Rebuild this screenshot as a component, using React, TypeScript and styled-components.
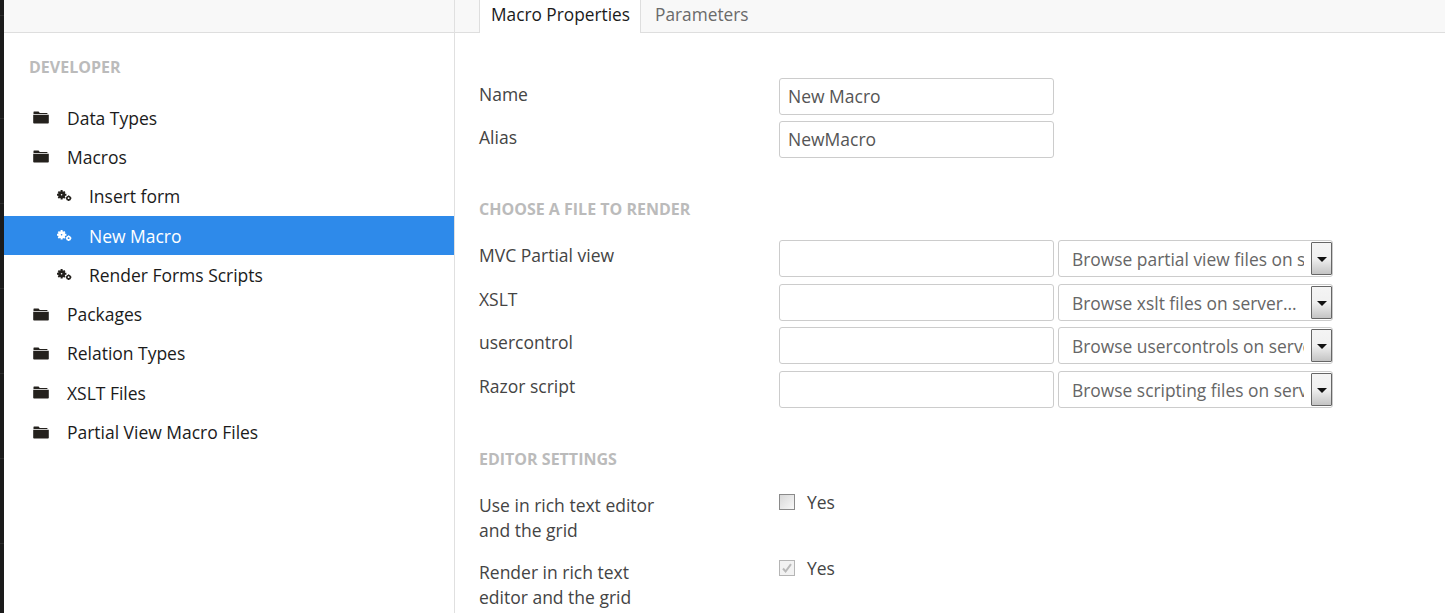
import React from "react";
import styled, { createGlobalStyle } from "styled-components";

const GlobalStyle = createGlobalStyle`
  html, body {
    margin: 0;
    padding: 0;
    height: 100%;
    overflow: hidden;
    background: #fff;
  }
  body {
    font-family: "Open Sans", "Liberation Sans", sans-serif;
    font-size: 17.5px;
    color: #444;
  }
`;

const FolderIcon = () => (
  <Folder viewBox="0 0 16 13" aria-hidden="true">
    <path d="M1 0.5h4.6l1.2 1.5h7.2c.3 0 .5.2.5.5v.5H.5V1c0-.3.2-.5.5-.5z" />
    <path d="M0.2 3.8h15.6v7.9c0 .5-.4.8-.8.8H1c-.4 0-.8-.3-.8-.8z" />
  </Folder>
);

const GearsIcon = ({ active }: { active?: boolean }) => (
  <Gears viewBox="0 0 15 12" $active={active} aria-hidden="true">
    <circle cx="4.6" cy="4.8" r="2.2" fill="none" stroke="currentColor" strokeWidth="2.8" />
    <path
      d="M3.6 0h2v2h-2zM3.6 7.6h2v2h-2zM-.2 3.8h2v2h-2zM7.4 3.8h2v2h-2zM.7 2.2L2 .9l1.4 1.4-1.3 1.3zM5.8 2.3L7.2.9l1.3 1.3-1.4 1.4zM.7 7.4L2.1 6l1.3 1.3L2 8.7zM5.8 7.3L7.1 6l1.4 1.4-1.3 1.3z"
      fill="currentColor"
    />
    <circle cx="11.6" cy="8.2" r="1.7" fill="none" stroke="currentColor" strokeWidth="1.6" />
    <path d="M11 5.4h1.2v1.2H11zM11 9.8h1.2V11H11zM8.8 7.6H10v1.2H8.8zM13.2 7.6h1.2v1.2h-1.2z" fill="currentColor" />
  </Gears>
);

const tree = [
  { label: "Data Types", kind: "folder" },
  { label: "Macros", kind: "folder" },
  { label: "Insert form", kind: "macro" },
  { label: "New Macro", kind: "macro", active: true },
  { label: "Render Forms Scripts", kind: "macro" },
  { label: "Packages", kind: "folder" },
  { label: "Relation Types", kind: "folder" },
  { label: "XSLT Files", kind: "folder" },
  { label: "Partial View Macro Files", kind: "folder" },
];

const files = [
  { label: "MVC Partial view", placeholder: "Browse partial view files on server..." },
  { label: "XSLT", placeholder: "Browse xslt files on server..." },
  { label: "usercontrol", placeholder: "Browse usercontrols on server..." },
  { label: "Razor script", placeholder: "Browse scripting files on server..." },
];

const App = () => {
  return (
    <Page>
      <GlobalStyle />
      <Rail />
      <Sidebar>
        <SideTop />
        <SectionTitle>DEVELOPER</SectionTitle>
        <Tree>
          {tree.map((item) => (
            <TreeRow key={item.label} $active={item.active}>
              {item.kind === "folder" ? (
                <FolderSlot>
                  <FolderIcon />
                </FolderSlot>
              ) : (
                <MacroSlot>
                  <GearsIcon active={item.active} />
                </MacroSlot>
              )}
              {item.label}
            </TreeRow>
          ))}
        </Tree>
      </Sidebar>
      <Main>
        <TabBar>
          <Tab $active>Macro Properties</Tab>
          <Tab>Parameters</Tab>
        </TabBar>
        <Form>
          <NameRows>
            <FieldRow>
              <Label>Name</Label>
              <TextInput defaultValue="New Macro" />
            </FieldRow>
            <FieldRow>
              <Label>Alias</Label>
              <TextInput defaultValue="NewMacro" />
            </FieldRow>
          </NameRows>
          <Heading>CHOOSE A FILE TO RENDER</Heading>
          <FileRows>
            {files.map((file) => (
              <FieldRow key={file.label}>
                <FileLabel>{file.label}</FileLabel>
                <TextInput />
                <Select>
                  <SelectText>{file.placeholder}</SelectText>
                  <SelectButton>
                    <Caret />
                  </SelectButton>
                </Select>
              </FieldRow>
            ))}
          </FileRows>
          <Heading $second>EDITOR SETTINGS</Heading>
          <CheckRow>
            <CheckLabel>
              Use in rich text editor
              <br />
              and the grid
            </CheckLabel>
            <CheckField>
              <Box />
              Yes
            </CheckField>
          </CheckRow>
          <CheckRow>
            <CheckLabel>
              Render in rich text
              <br />
              editor and the grid
            </CheckLabel>
            <CheckField>
              <Box $checked>
                <svg viewBox="0 0 14 14" width="14" height="14" aria-hidden="true">
                  <path d="M3 7.5l2.6 3L11 3.2" fill="none" stroke="#b9b9b9" strokeWidth="2" />
                </svg>
              </Box>
              Yes
            </CheckField>
          </CheckRow>
        </Form>
      </Main>
    </Page>
  );
};

const Page = styled.div`
  display: flex;
  height: 613px;
  overflow: hidden;
`;

const Rail = styled.div`
  flex: 0 0 4px;
  background: repeating-linear-gradient(
    to bottom,
    #1b1b1b 0,
    #1b1b1b 84px,
    #2c2c2c 84px,
    #2c2c2c 85px
  );
  background-position: 0 34px;
`;

const Sidebar = styled.aside`
  flex: 0 0 450px;
  border-right: 1px solid #e0e0e0;
`;

const SideTop = styled.div`
  height: 32px;
  background: #f8f8f8;
  border-bottom: 1px solid #dedede;
`;

const SectionTitle = styled.div`
  padding: 23px 0 0 25px;
  height: 26px;
  line-height: 22px;
  font-size: 16px;
  font-weight: 700;
  color: #bbb;
`;

const Tree = styled.div`
  margin-top: 16px;
`;

const TreeRow = styled.div<{ $active?: boolean }>`
  display: flex;
  align-items: center;
  height: 39.3px;
  font-size: 17.5px;
  letter-spacing: -0.02px;
  color: ${({ $active }) => ($active ? "#fff" : "#1b1b1b")};
  background: ${({ $active }) => ($active ? "#2e8aea" : "transparent")};
`;

const FolderSlot = styled.span`
  display: flex;
  width: 63px;
  padding-left: 29px;
  box-sizing: border-box;
`;

const MacroSlot = styled.span`
  display: flex;
  width: 85px;
  padding-left: 52.5px;
  box-sizing: border-box;
`;

const Folder = styled.svg`
  width: 16px;
  height: 13px;
  fill: #24211d;
`;

const Gears = styled.svg<{ $active?: boolean }>`
  width: 15px;
  height: 12px;
  color: ${({ $active }) => ($active ? "#fff" : "#24211d")};
`;

const Main = styled.main`
  flex: 1;
  min-width: 0;
`;

const TabBar = styled.div`
  display: flex;
  height: 32px;
  padding-left: 24px;
  background: #f8f8f8;
  border-bottom: 1px solid #dedede;
`;

const Tab = styled.div<{ $active?: boolean }>`
  height: ${({ $active }) => ($active ? "33px" : "32px")};
  padding: ${({ $active }) => ($active ? "0 10px 0 11px" : "0 14px")};
  box-sizing: border-box;
  line-height: 29px;
  font-size: 17.3px;
  color: ${({ $active }) => ($active ? "#1b1b1b" : "#6a6a6a")};
  background: ${({ $active }) => ($active ? "#fff" : "transparent")};
  border-left: ${({ $active }) => ($active ? "1px solid #dedede" : "0")};
  border-right: ${({ $active }) => ($active ? "1px solid #dedede" : "0")};
`;

const Form = styled.div`
  padding: 45px 0 0 24px;
`;

const NameRows = styled.div`
  display: grid;
  row-gap: 6px;
`;

const FileRows = styled.div`
  display: grid;
  row-gap: 6.67px;
`;

const FieldRow = styled.div`
  display: flex;
  align-items: flex-start;
`;

const Label = styled.label`
  flex: 0 0 300px;
  line-height: 32px;
  font-size: 17.5px;
  color: #444;
`;

const FileLabel = styled(Label)`
  line-height: 31.6px;
`;

const TextInput = styled.input`
  width: 275px;
  height: 37px;
  padding: 0 8px 2px;
  box-sizing: border-box;
  border: 1px solid #ccc;
  border-radius: 3px;
  outline: none;
  font: 17.5px "Open Sans", "Liberation Sans", sans-serif;
  color: #555;
  background: #fff;
`;

const Select = styled.div`
  display: flex;
  align-items: stretch;
  width: 275px;
  height: 37px;
  margin-left: 4px;
  padding: 1px 0 1px 13px;
  box-sizing: border-box;
  border: 1px solid #ccc;
  border-radius: 3px;
  background: #fff;
`;

const SelectText = styled.span`
  flex: 1;
  min-width: 0;
  margin-right: 7px;
  overflow: hidden;
  white-space: nowrap;
  line-height: 35px;
  font-size: 17.4px;
  color: #666;
`;

const SelectButton = styled.span`
  display: flex;
  justify-content: center;
  flex: 0 0 21px;
  padding-top: 14px;
  box-sizing: border-box;
  border: 1px solid #666;
  border-radius: 1px;
  background: linear-gradient(to bottom, #f4f4f4, #f0f0f0 50%, #c4c4c4);
`;

const Caret = styled.span`
  width: 0;
  height: 0;
  border-left: 5px solid transparent;
  border-right: 5px solid transparent;
  border-top: 5px solid #111;
`;

const Heading = styled.div<{ $second?: boolean }>`
  margin: ${({ $second }) => ($second ? "40px 0 21px" : "40px 0 20px")};
  line-height: 22px;
  font-size: 16px;
  font-weight: 700;
  color: #bbb;
`;

const CheckRow = styled.div`
  display: flex;
  align-items: flex-start;
  margin-bottom: 14px;
`;

const CheckLabel = styled.div`
  flex: 0 0 300px;
  margin-top: 2px;
  line-height: 25px;
  font-size: 17.5px;
  color: #444;
  ${CheckRow}:last-child & {
    margin-top: 3px;
  }
`;

const CheckField = styled.div`
  display: flex;
  align-items: center;
  height: 22px;
  font-size: 17.5px;
  color: #444;
`;

const Box = styled.span<{ $checked?: boolean }>`
  display: flex;
  align-items: center;
  justify-content: center;
  width: 16px;
  height: 16px;
  margin-right: 12px;
  box-sizing: border-box;
  border: 1px solid ${({ $checked }) => ($checked ? "#b5b5b5" : "#8a8a8a")};
  background: ${({ $checked }) =>
    $checked ? "#f2f2f2" : "linear-gradient(135deg, #d8d8d8, #f8f8f8)"};
`;

export default App;
